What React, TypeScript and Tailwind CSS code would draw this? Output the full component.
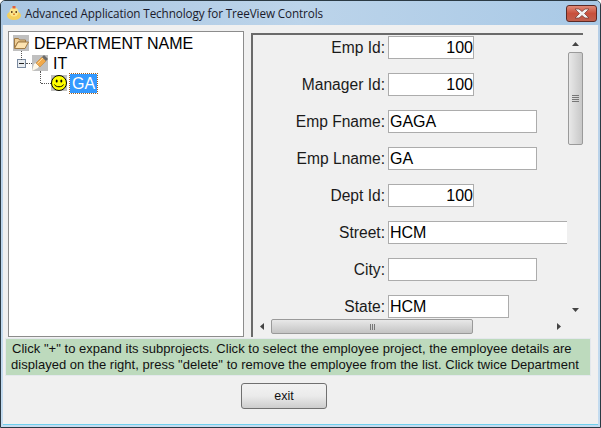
import React from 'react';

const rows = [
  { label: 'Emp Id:', value: '100', width: 'w-[86px]', right: true },
  { label: 'Manager Id:', value: '100', width: 'w-[86px]', right: true },
  { label: 'Emp Fname:', value: 'GAGA', width: 'w-[149px]' },
  { label: 'Emp Lname:', value: 'GA', width: 'w-[149px]' },
  { label: 'Dept Id:', value: '100', width: 'w-[86px]', right: true },
  { label: 'Street:', value: 'HCM', width: 'w-[200px]' },
  { label: 'City:', value: '', width: 'w-[149px]' },
  { label: 'State:', value: 'HCM', width: 'w-[121px]' },
];

const FolderIcon = () => (
  <svg width="16" height="16" viewBox="0 0 16 16" className="bg-[#c0c0c0] shrink-0">
    <path d="M1.5 13V3.5h4l1 1.5h6v2H5L1.5 13z" fill="#f0cf96" stroke="#a07a45" />
    <path d="M1.5 13.5l3.5-6.5h10.5l-3.5 6.5z" fill="#fde3b0" stroke="#a07a45" />
  </svg>
);

const PencilIcon = () => (
  <svg width="16" height="16" viewBox="0 0 16 16" className="bg-[#c0c0c0] shrink-0">
    <path d="M0 16L2 9l2-1 3 3-1 2z" fill="#fff8e8" />
    <path d="M4 8l6-6 4 4-6 6-1-1z" fill="#f2a94a" stroke="#b57a30" strokeWidth="0.5" />
    <path d="M5.5 8.5L11 3" stroke="#fbd898" strokeWidth="1" />
    <path d="M10 2l2-2 4 4-2 2z" fill="#6a6a6a" />
  </svg>
);

const SmileIcon = () => (
  <svg width="16" height="16" viewBox="0 0 16 16" className="bg-[#c0c0c0] shrink-0">
    <circle cx="8" cy="8" r="7.5" fill="#ffff00" stroke="#000" />
    <ellipse cx="5.7" cy="6" rx="1" ry="1.5" fill="#000" />
    <ellipse cx="10.3" cy="6" rx="1" ry="1.5" fill="#000" />
    <path d="M3.5 9.5c1 3 8 3 9 0" fill="none" stroke="#000" />
  </svg>
);

const AppIcon = () => (
  <svg width="16" height="16" viewBox="0 0 16 16" className="shrink-0">
    <ellipse cx="8" cy="10.5" rx="7" ry="4.5" fill="#f4cf5c" />
    <circle cx="8" cy="7" r="4.5" fill="#fbe58c" />
    <rect x="6.5" y="1" width="3" height="2.5" fill="#e2603a" />
    <rect x="5" y="6" width="1.5" height="2" fill="#6a4a20" />
    <rect x="9.5" y="6" width="1.5" height="2" fill="#6a4a20" />
    <rect x="7" y="8.5" width="2" height="1.5" fill="#e08a30" />
  </svg>
);

const Triangle = ({ dir }: { dir: 'up' | 'down' | 'left' | 'right' }) => {
  const points = { up: '0,4 7,4 3.5,0', down: '0,0 7,0 3.5,4', left: '4,0 4,7 0,3.5', right: '0,0 0,7 4,3.5' }[dir];
  const vertical = dir === 'up' || dir === 'down';
  return (
    <svg width={vertical ? 7 : 4} height={vertical ? 4 : 7}>
      <polygon points={points} fill="#444" />
    </svg>
  );
};

export default function App() {
  return (
    <div className="w-[601px] h-[428px] overflow-hidden rounded-t-[5px] border border-[#2b3a44] bg-gradient-to-b from-[#b4cde6] to-[#c4dcf0] flex flex-col font-['Liberation_Sans',sans-serif] text-black">
      {/* Title bar */}
      <div className="h-[24px] shrink-0 flex items-center pl-[5px] pr-[3px] bg-gradient-to-r from-[#a9c6e2] via-[#bcd4ea] to-[#a9c9e6]">
        <AppIcon />
        <span className="ml-[3px] mt-[2px] text-[11.7px] text-[#1a1a2a] font-['Open_Sans',sans-serif] tracking-[-0.1px]">
          Advanced Application Technology for TreeView Controls
        </span>
        <div className="ml-auto mt-[1px] w-[31px] h-[17px] rounded-[3px] border border-[#5c2a26] bg-gradient-to-b from-[#e08a78] via-[#c8503c] to-[#c0604e] flex items-center justify-center">
          <svg width="16" height="11" viewBox="0 0 16 11">
            <path d="M1 1h4l3 2.5L11 1h4l-4.5 4.5L15 10h-4L8 7.5 5 10H1l4.500-4.500z" fill="#f2f2f2" stroke="#6b3a34" strokeWidth="0.7" />
          </svg>
        </div>
      </div>

      {/* Client area */}
      <div className="mx-[2px] mb-[2px] flex-1 bg-[#f0f0f0] flex flex-col min-h-0 border-b border-[#6fd0ee]">
        <div className="flex h-[313px] shrink-0 pt-[6px] pl-[5px]">
          {/* Tree */}
          <div className="w-[236px] h-[306px] shrink-0 bg-white border border-[#8c8c8c] pl-[4px] pt-[1px]">
            <div className="flex items-center h-[20px]">
              <FolderIcon />
              <span className="ml-[5px] mt-[2px] text-[16px] leading-none">DEPARTMENT NAME</span>
            </div>
            <div className="relative flex items-center h-[20px] pl-[4px]">
              <span className="absolute left-[8px] -top-[2px] h-[9px] border-l border-dotted border-[#555]" />
              <span className="w-[9px] h-[9px] shrink-0 border border-[#7a8aa0] bg-[#e8ecf0] flex items-center justify-center">
                <span className="w-[5px] h-px bg-[#222]" />
              </span>
              <span className="w-[6px] border-t border-dotted border-[#555]" />
              <PencilIcon />
              <span className="ml-[5px] mt-[2px] text-[16px] leading-none">IT</span>
            </div>
            <div className="relative flex items-center h-[20px] pl-[28px]">
              <span className="absolute left-[27px] -top-[2px] h-[12px] border-l border-dotted border-[#555]" />
              <span className="w-[10px] border-t border-dotted border-[#555]" />
              <SmileIcon />
              <span className="ml-[3px] h-[19px] w-[27px] text-center bg-[#3399ff] text-white text-[16px] leading-[19px] outline-1 outline-dotted outline-[#a06020]">
                GA
              </span>
            </div>
          </div>

          {/* Details */}
          <div className="ml-[7px] mt-[2px] w-[332px] h-[304px] shrink-0 border-t-2 border-l-2 border-[#6a6a6a] flex flex-col">
            <div className="flex h-[283px]">
              <div className="w-[314px] overflow-hidden flex flex-col gap-[14px] pt-[1px]">
                {rows.map((r) => (
                  <div key={r.label} className="flex items-center h-[23px] shrink-0">
                    <span className="w-[132px] shrink-0 text-right text-[15.6px] leading-none text-[#1a1a1a]">{r.label}</span>
                    <span
                      className={`ml-[3px] h-[23px] shrink-0 bg-white border border-[#acacac] text-[16px] leading-[21px] ${r.width} ${r.right ? 'text-right' : 'pl-px'}`}
                    >
                      {r.value}
                    </span>
                  </div>
                ))}
              </div>
              {/* Vertical scrollbar */}
              <div className="w-[16px] shrink-0 flex flex-col items-center bg-[#f0f0f0]">
                <div className="h-[17px] flex items-center justify-center">
                  <Triangle dir="up" />
                </div>
                <div className="w-[15px] h-[93px] rounded-[2px] border border-[#9a9a9a] bg-gradient-to-r from-[#e8e8e8] to-[#c8c8c8] flex flex-col items-center justify-center gap-px">
                  <span className="w-[7px] h-px bg-[#777]" />
                  <span className="w-[7px] h-px bg-[#777]" />
                  <span className="w-[7px] h-px bg-[#777]" />
                  <span className="w-[7px] h-px bg-[#777]" />
                </div>
                <div className="flex-1" />
                <div className="h-[17px] flex items-center justify-center">
                  <Triangle dir="down" />
                </div>
              </div>
            </div>
            {/* Horizontal scrollbar */}
            <div className="h-[17px] w-[314px] flex items-center bg-[#f0f0f0]">
              <div className="w-[18px] flex justify-center">
                <Triangle dir="left" />
              </div>
              <div className="w-[202px] h-[15px] rounded-[2px] border border-[#9a9a9a] bg-gradient-to-b from-[#e8e8e8] to-[#c4c4c4] flex items-center justify-center gap-px">
                <span className="w-px h-[6px] bg-[#777]" />
                <span className="w-px h-[6px] bg-[#777]" />
                <span className="w-px h-[6px] bg-[#777]" />
              </div>
              <div className="flex-1" />
              <div className="w-[17px] flex justify-center">
                <Triangle dir="right" />
              </div>
            </div>
          </div>
        </div>

        {/* Help text */}
        <div className="ml-[2px] mr-[7px] h-[38px] bg-[#bddabd] border border-[#e4e8ec] text-[13px] leading-[16px] tracking-[0.03px] text-[#111] pl-[6px] pt-[2px] whitespace-nowrap">
          <div>Click "+" to expand its subprojects. Click to select the employee project, the employee details are</div>
          <div className="-ml-px">displayed on the right, press "delete" to remove the employee from the list. Click twice Department</div>
        </div>

        {/* Exit */}
        <div className="pt-[7px] pl-[238px]">
          <button className="block w-[86px] h-[26px] rounded-[3px] border border-[#707070] bg-gradient-to-b from-[#f2f2f2] via-[#ebebeb] via-50% to-[#cdcdcd] text-[12.5px] text-[#111]">
            exit
          </button>
        </div>
      </div>
    </div>
  );
}
